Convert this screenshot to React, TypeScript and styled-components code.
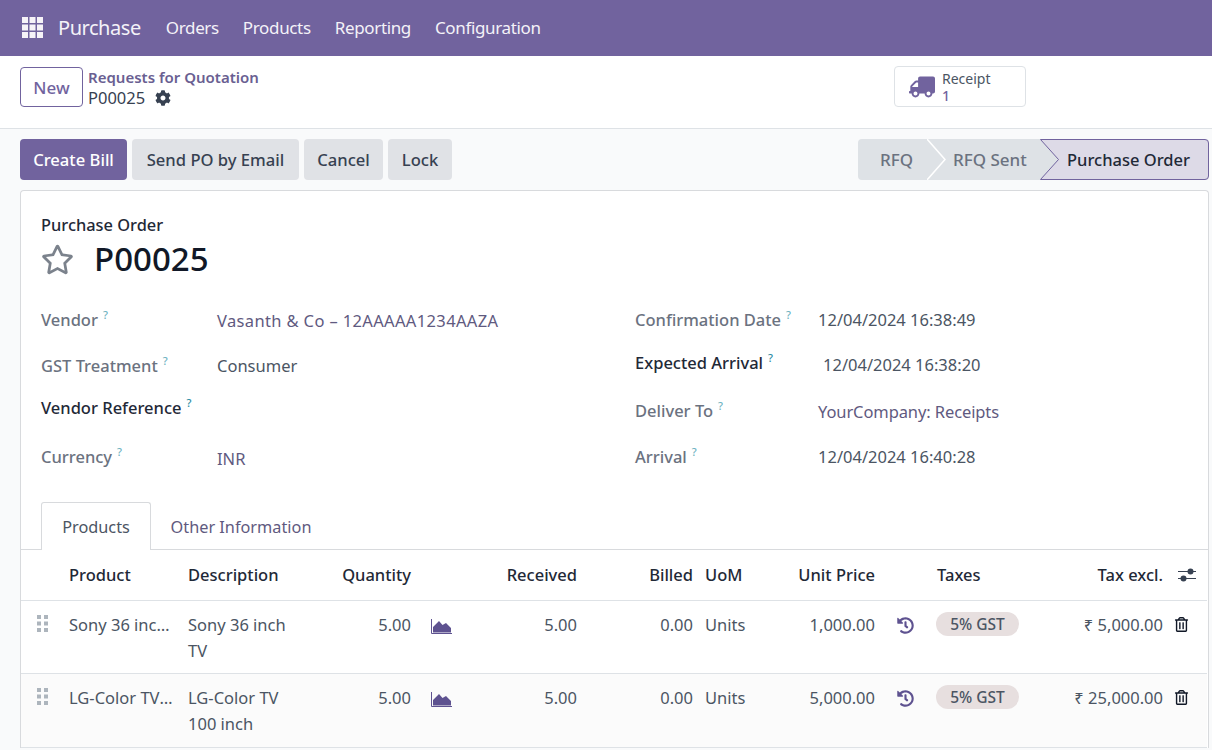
import styled, { createGlobalStyle } from 'styled-components';
import { FaCog, FaTruck, FaRegStar, FaHistory, FaRegTrashAlt } from 'react-icons/fa';

const GlobalStyle = createGlobalStyle`
	html, body {
		margin: 0;
		padding: 0;
		height: 750px;
		overflow: hidden;
		background: #f9fafb;
		font-family: 'Noto Sans', 'Liberation Sans', sans-serif;
		color: #374151;
	}
	* {
		box-sizing: border-box;
	}
`;

const menu = ['Orders', 'Products', 'Reporting', 'Configuration'];

const leftFields = [
	{ label: 'Vendor', value: 'Vasanth & Co – 12AAAAA1234AAZA', link: true, height: 46, nudge: 1, spacing: 0.36 },
	{ label: 'GST Treatment', value: 'Consumer', height: 46 },
	{ label: 'Vendor Reference', strong: true, height: 38 },
	{ label: 'Currency', value: 'INR', link: true, height: 60, nudge: 2 },
];

const rightFields = [
	{ label: 'Confirmation Date', value: '12/04/2024 16:38:49', height: 46 },
	{ label: 'Expected Arrival', value: '12/04/2024 16:38:20', strong: true, height: 40, indent: 5, nudge: 2 },
	{ label: 'Deliver To', value: 'YourCompany: Receipts', link: true, height: 56, nudge: 1, spacing: -0.1 },
	{ label: 'Arrival', value: '12/04/2024 16:40:28', height: 36 },
];

const lines = [
	{ product: 'Sony 36 inch TV', description: 'Sony 36 inch TV', price: '1,000.00', total: '₹ 5,000.00', height: 73 },
	{ product: 'LG-Color TV 100 inch', description: 'LG-Color TV 100 inch', price: '5,000.00', total: '₹ 25,000.00', height: 74 },
];

type Field = {
	label: string;
	value?: string;
	link?: boolean;
	strong?: boolean;
	height: number;
	nudge?: number;
	indent?: number;
	spacing?: number;
};

function FieldGroup({ fields, labelWidth }: { fields: Field[]; labelWidth: number }) {
	return (
		<Group>
			{fields.map((field) => (
				<FieldRow key={field.label} $height={field.height}>
					<FieldLabel $width={labelWidth} $strong={field.strong}>
						{field.label}
						<Help $strong={field.strong}>?</Help>
					</FieldLabel>
					{field.value && (
						<FieldValue $link={field.link} $nudge={field.nudge} $indent={field.indent} $spacing={field.spacing}>
							{field.value}
						</FieldValue>
					)}
				</FieldRow>
			))}
		</Group>
	);
}

export default function App() {
	return (
		<>
			<GlobalStyle />
			<NavBar>
				<AppsIcon viewBox="0 0 21 21">
					{[0, 7.5, 15].flatMap((y) =>
						[0, 7.5, 15].map((x) => <rect key={`${x}-${y}`} x={x} y={y} width="6" height="6" />),
					)}
				</AppsIcon>
				<Brand>Purchase</Brand>
				{menu.map((item) => (
					<NavItem key={item}>{item}</NavItem>
				))}
			</NavBar>

			<ControlPanel>
				<NewButton>New</NewButton>
				<Breadcrumb>
					<BreadcrumbLink>Requests for Quotation</BreadcrumbLink>
					<BreadcrumbCurrent>
						P00025
						<FaCog size={16} color="#374151" />
					</BreadcrumbCurrent>
				</Breadcrumb>
				<ReceiptButton>
					<FlippedTruck size={26} color="#71639e" />
					<ReceiptText>
						<span>Receipt</span>
						<ReceiptCount>1</ReceiptCount>
					</ReceiptText>
				</ReceiptButton>
			</ControlPanel>

			<ActionBar>
				<Actions>
					<ActionButton $primary $width={107}>Create Bill</ActionButton>
					<ActionButton $width={167}>Send PO by Email</ActionButton>
					<ActionButton $width={79}>Cancel</ActionButton>
					<ActionButton $width={64}>Lock</ActionButton>
				</Actions>
				<StatusBar>
					<Step $width={69}>RFQ</Step>
					<Step $width={113}>
						<Chevron viewBox="0 0 20 41">
							<path d="M0 0 L18 20.5 L0 41" fill="none" stroke="#fff" strokeWidth="1.5" />
						</Chevron>
						RFQ Sent
					</Step>
					<ActiveStep>
						<ActiveShape viewBox="0 0 169 41">
							<path
								d="M0.5 0.5 H165 a3.5 3.5 0 0 1 3.5 3.5 V37 a3.5 3.5 0 0 1 -3.5 3.5 H0.5 L18.5 20.5 Z"
								fill="#dddae7"
								stroke="#71639e"
							/>
						</ActiveShape>
						<ActiveLabel>Purchase Order</ActiveLabel>
					</ActiveStep>
				</StatusBar>
			</ActionBar>

			<Sheet>
				<Heading>
					<Overline>Purchase Order</Overline>
					<TitleRow>
						<FaRegStar size={33} color="#7b828c" />
						<Title>P00025</Title>
					</TitleRow>
				</Heading>

				<Groups>
					<FieldGroup fields={leftFields} labelWidth={176} />
					<FieldGroup fields={rightFields} labelWidth={183} />
				</Groups>

				<Tabs>
					<Tab $active>Products</Tab>
					<Tab>Other Information</Tab>
				</Tabs>

				<Lines>
					<colgroup>
						{[42, 119, 148, 87, 48, 118, 116, 61, 121, 50, 109, 129, 38].map((width, index) => (
							<col key={index} width={width} />
						))}
					</colgroup>
					<thead>
						<tr>
							<HeadCell />
							<HeadCell>Product</HeadCell>
							<HeadCell>Description</HeadCell>
							<HeadCell $right>Quantity</HeadCell>
							<HeadCell />
							<HeadCell $right>Received</HeadCell>
							<HeadCell $right>Billed</HeadCell>
							<HeadCell>UoM</HeadCell>
							<HeadCell $right>Unit Price</HeadCell>
							<HeadCell />
							<HeadCell>Taxes</HeadCell>
							<HeadCell $right>Tax excl.</HeadCell>
							<HeadCell>
								<AdjustIcon viewBox="0 0 18 16">
									<path d="M0 4.5 H18 M0 11.5 H18" stroke="#374151" strokeWidth="1.2" />
									<circle cx="12.5" cy="4.5" r="3" fill="#374151" />
									<circle cx="5.5" cy="11.5" r="3" fill="#374151" />
								</AdjustIcon>
							</HeadCell>
						</tr>
					</thead>
					<tbody>
						{lines.map((line, index) => (
							<LineRow key={line.product} $shaded={index % 2 === 1} $height={line.height}>
								<Cell>
									<DragHandle viewBox="0 0 11 17">
										{[0, 6.5, 13].flatMap((y) =>
											[0, 7].map((x) => <rect key={`${x}-${y}`} x={x} y={y} width="4" height="4" />),
										)}
									</DragHandle>
								</Cell>
								<Cell>
									<ProductName>{line.product}</ProductName>
								</Cell>
								<Cell>
									<Description>{line.description}</Description>
								</Cell>
								<Cell $right>5.00</Cell>
								<Cell>
									<ForecastIcon viewBox="0 0 21 15">
										<path d="M0.5 0 V14.5 H21" fill="none" stroke="#5e5290" strokeWidth="1" />
										<path d="M2 13.5 V8 L8 2 L11.5 6 L15 4 L20 9 V13.5 Z" fill="#5e5290" />
									</ForecastIcon>
								</Cell>
								<Cell $right>5.00</Cell>
								<Cell $right>0.00</Cell>
								<Cell>Units</Cell>
								<Cell $right>{line.price}</Cell>
								<Cell>
									<HistoryIcon>
										<FaHistory size={17} color="#5e5290" />
									</HistoryIcon>
								</Cell>
								<Cell>
									<TaxBadge>5% GST</TaxBadge>
								</Cell>
								<Cell $right>{line.total}</Cell>
								<Cell>
									<TrashIcon>
										<FaRegTrashAlt size={15} color="#111827" />
									</TrashIcon>
								</Cell>
							</LineRow>
						))}
					</tbody>
				</Lines>
			</Sheet>
		</>
	);
}

const NavBar = styled.div`
	display: flex;
	align-items: center;
	height: 56px;
	padding: 0 0 2px 22px;
	background: #71639e;
	color: #f4f2f8;
	font-size: 17px;
	letter-spacing: -0.35px;
`;

const AppsIcon = styled.svg`
	width: 21px;
	height: 21px;
	margin-right: 15px;
	fill: #f6f3f8;
`;

const Brand = styled.div`
	font-size: 20px;
	letter-spacing: -0.45px;
	margin-right: 25px;
`;

const NavItem = styled.div`
	margin-right: 24px;
`;

const ControlPanel = styled.div`
	display: flex;
	align-items: flex-start;
	height: 73px;
	padding: 11px 0 0 20px;
	background: #fff;
	border-bottom: 1px solid #dee2e6;
`;

const NewButton = styled.div`
	display: flex;
	align-items: center;
	justify-content: center;
	width: 63px;
	height: 40px;
	border: 1px solid #71639e;
	border-radius: 4px;
	color: #71639e;
	font-size: 17px;
	font-weight: 500;
`;

const Breadcrumb = styled.div`
	display: flex;
	flex-direction: column;
	width: 806px;
	margin-left: 5px;
`;

const BreadcrumbLink = styled.div`
	font-size: 15px;
	font-weight: 600;
	line-height: 21px;
	color: #6a5f92;
`;

const BreadcrumbCurrent = styled.div`
	display: flex;
	align-items: center;
	gap: 10px;
	font-size: 16.5px;
	line-height: 20px;
	color: #374151;
`;

const ReceiptButton = styled.div`
	display: flex;
	align-items: center;
	width: 132px;
	height: 41px;
	margin-top: -1px;
	padding-left: 14px;
	border: 1px solid #dee2e6;
	border-radius: 4px;
`;

const FlippedTruck = styled(FaTruck)`
	transform: scaleX(-1);
	margin-right: 7px;
`;

const ReceiptText = styled.div`
	display: flex;
	flex-direction: column;
	font-size: 14px;
	line-height: 17px;
	color: #4b5563;
`;

const ReceiptCount = styled.span`
	color: #71639e;
	font-weight: 500;
`;

const ActionBar = styled.div`
	display: flex;
	justify-content: space-between;
	height: 61px;
	padding: 10px 3px 0 20px;
`;

const Actions = styled.div`
	display: flex;
	gap: 5px;
`;

const ActionButton = styled.div<{ $primary?: boolean; $width: number }>`
	display: flex;
	align-items: center;
	justify-content: center;
	width: ${(props) => props.$width}px;
	height: 41px;
	border-radius: 4px;
	background: ${(props) => (props.$primary ? '#71639e' : '#e0e2e6')};
	color: ${(props) => (props.$primary ? '#fff' : '#374151')};
	font-size: 16.6px;
	font-weight: 500;
`;

const StatusBar = styled.div`
	display: flex;
	height: 41px;
	border-radius: 4px;
	background: #dee2e6;
	font-size: 17px;
	font-weight: 500;
	color: #6b7280;
`;

const Step = styled.div<{ $width: number }>`
	position: relative;
	display: flex;
	align-items: center;
	width: ${(props) => props.$width}px;
	padding-left: ${(props) => (props.$width > 100 ? 26 : 22)}px;
`;

const Chevron = styled.svg`
	position: absolute;
	left: 0;
	top: 0;
	width: 20px;
	height: 41px;
`;

const ActiveStep = styled.div`
	position: relative;
	display: flex;
	align-items: center;
	width: 169px;
	padding-left: 27px;
	font-size: 16.5px;
	color: #1f2937;
`;

const ActiveShape = styled.svg`
	position: absolute;
	left: 0;
	top: 0;
	width: 169px;
	height: 41px;
`;

const ActiveLabel = styled.span`
	position: relative;
`;

const Sheet = styled.div`
	margin: 0 3px 0 20px;
	background: #fff;
	border: 1px solid #d8dadd;
	border-bottom: 0;
	border-radius: 4px 4px 0 0;
`;

const Heading = styled.div`
	padding: 22px 0 0 20px;
	height: 105px;
`;

const Overline = styled.div`
	font-size: 16.4px;
	line-height: 24px;
	font-weight: 500;
	color: #1f2937;
`;

const TitleRow = styled.div`
	display: flex;
	align-items: center;
	gap: 20px;
`;

const Title = styled.div`
	font-size: 33px;
	line-height: 44px;
	font-weight: 500;
	color: #111827;
`;

const Groups = styled.div`
	display: grid;
	grid-template-columns: 594px 1fr;
	padding-left: 20px;
`;

const Group = styled.div`
	display: flex;
	flex-direction: column;
`;

const FieldRow = styled.div<{ $height: number }>`
	display: flex;
	align-items: center;
	height: ${(props) => props.$height}px;
`;

const FieldLabel = styled.div<{ $width: number; $strong?: boolean }>`
	width: ${(props) => props.$width}px;
	flex-shrink: 0;
	font-size: 16.5px;
	font-weight: 500;
	color: ${(props) => (props.$strong ? '#1f2937' : '#6b7280')};
`;

const Help = styled.sup<{ $strong?: boolean }>`
	margin-left: 5px;
	font-size: 11px;
	font-weight: 500;
	color: ${(props) => (props.$strong ? '#2b8ca3' : '#6fb3c2')};
`;

const FieldValue = styled.div<{ $link?: boolean; $nudge?: number; $indent?: number; $spacing?: number }>`
	padding-top: ${(props) => (props.$nudge || 0) * 2}px;
	padding-left: ${(props) => props.$indent || 0}px;
	font-size: 16.5px;
	letter-spacing: ${(props) => props.$spacing || 0}px;
	color: ${(props) => (props.$link ? '#5f5a80' : '#4b5563')};
`;

const Tabs = styled.div`
	display: flex;
	height: 48px;
	margin-top: 16px;
	padding-left: 20px;
	border-bottom: 1px solid #d8dadd;
`;

const Tab = styled.div<{ $active?: boolean }>`
	display: flex;
	align-items: center;
	justify-content: center;
	width: ${(props) => (props.$active ? '110px' : '180px')};
	height: ${(props) => (props.$active ? '48px' : '47px')};
	padding-top: ${(props) => (props.$active ? '0' : '2px')};
	font-size: 16.3px;
	color: ${(props) => (props.$active ? '#4b5563' : '#5f5a80')};
	background: ${(props) => (props.$active ? '#fff' : 'transparent')};
	border: ${(props) => (props.$active ? '1px solid #d8dadd' : '0')};
	border-bottom: 0;
	border-radius: 3px 3px 0 0;
`;

const Lines = styled.table`
	width: 1186px;
	table-layout: fixed;
	border-collapse: collapse;
	font-size: 16.5px;
`;

const HeadCell = styled.th<{ $right?: boolean }>`
	height: 50px;
	padding: 0 6px;
	font-weight: 500;
	color: #1f2937;
	text-align: ${(props) => (props.$right ? 'right' : 'left')};
	border-bottom: 1px solid #dee2e6;
`;

const LineRow = styled.tr<{ $shaded?: boolean; $height: number }>`
	height: ${(props) => props.$height}px;
	background: ${(props) => (props.$shaded ? '#fbfbfb' : '#fff')};
	border-bottom: 1px solid #dee2e6;
`;

const Cell = styled.td<{ $right?: boolean }>`
	padding: 11px 6px 0;
	vertical-align: top;
	line-height: 26.5px;
	color: #4b5563;
	text-align: ${(props) => (props.$right ? 'right' : 'left')};
`;

const DragHandle = styled.svg`
	display: block;
	width: 11px;
	height: 17px;
	margin: 3px 0 0 10px;
	fill: #adb5bd;
`;

const ProductName = styled.div`
	white-space: nowrap;
	overflow: hidden;
	text-overflow: ellipsis;
`;

const Description = styled.div`
	width: 120px;
`;

const ForecastIcon = styled.svg`
	display: block;
	width: 21px;
	height: 15px;
	margin: 7px 0 0 8px;
`;

const HistoryIcon = styled.div`
	display: flex;
	margin: 5px 0 0 10px;
`;

const TaxBadge = styled.span`
	display: block;
	width: 83px;
	height: 24px;
	margin-left: -1px;
	border-radius: 12px;
	background: #e7dfdf;
	color: #4b5563;
	font-size: 15.5px;
	font-weight: 500;
	line-height: 25px;
	text-align: center;
`;

const TrashIcon = styled.div`
	display: flex;
	margin: 5px 0 0 -1px;
`;

const AdjustIcon = styled.svg`
	display: block;
	width: 18px;
	height: 16px;
	margin-left: 3px;
`;
